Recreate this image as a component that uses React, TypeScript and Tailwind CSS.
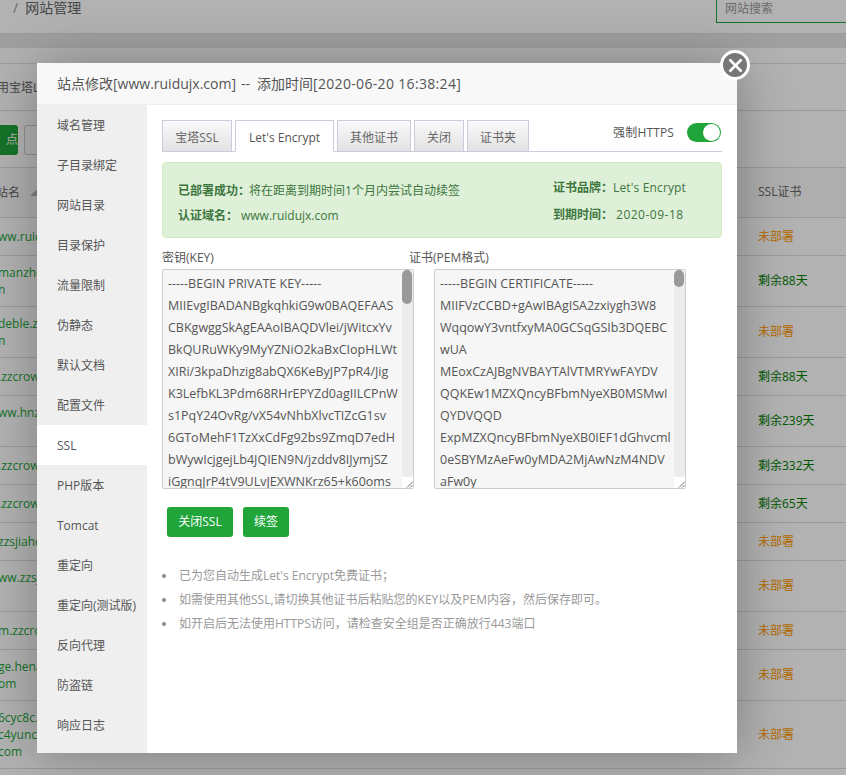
import { X } from "lucide-react";

const menu = ["域名管理", "子目录绑定", "网站目录", "目录保护", "流量限制", "伪静态", "默认文档", "配置文件", "SSL", "PHP版本", "Tomcat", "重定向", "重定向(测试版)", "反向代理", "防盗链", "响应日志"];

const rows = [
  { h: "h-[38px]", lines: ["ww.ruidujx.com"], ssl: "未部署" },
  { h: "h-[51px]", lines: ["manzhe.zzcrowd.co", "n"], ssl: "剩余88天" },
  { h: "h-[51px]", lines: ["deble.zzcrowd.co", "n"], ssl: "未部署" },
  { h: "h-[38px]", lines: [".zzcrowd.com"], ssl: "剩余88天" },
  { h: "h-[51px]", lines: ["ww.hnzzcrowd.com", "\u00a0"], ssl: "剩余239天" },
  { h: "h-[38px]", lines: [".zzcrowd.com"], ssl: "剩余332天" },
  { h: "h-[38px]", lines: [".zzcrowd.com"], ssl: "剩余65天" },
  { h: "h-[38px]", lines: ["zzsjiahe.com"], ssl: "未部署" },
  { h: "h-[51px]", lines: ["ww.zzsjiahe.com", "\u00a0"], ssl: "未部署" },
  { h: "h-[38px]", lines: ["m.zzcrowd.com"], ssl: "未部署" },
  { h: "h-[51px]", lines: ["ge.henan.com", "om"], ssl: "未部署" },
  { h: "h-[68px]", lines: ["6cyc8c.com", "c4yunc.com", "com"], ssl: "未部署" },
];

const keyLines = [
  "-----BEGIN PRIVATE KEY-----",
  "MIIEvgIBADANBgkqhkiG9w0BAQEFAAS",
  "CBKgwggSkAgEAAoIBAQDVlei/jWitcxYv",
  "BkQURuWKy9MyYZNiO2kaBxCIopHLWt",
  "XIRi/3kpaDhzig8abQX6KeByJP7pR4/Jig",
  "K3LefbKL3Pdm68RHrEPYZd0agIILCPnW",
  "s1PqY24OvRg/vX54vNhbXlvcTIZcG1sv",
  "6GToMehF1TzXxCdFg92bs9ZmqD7edH",
  "bWywIcjgejLb4JQIEN9N/jzddv8IJymjSZ",
  "iGgnqJrP4tV9ULvJEXWNKrz65+k60oms",
];

const certLines = [
  "-----BEGIN CERTIFICATE-----",
  "MIIFVzCCBD+gAwIBAgISA2zxiygh3W8",
  "WqqowY3vntfxyMA0GCSqGSIb3DQEBC",
  "wUA",
  "MEoxCzAJBgNVBAYTAlVTMRYwFAYDV",
  "QQKEw1MZXQncyBFbmNyeXB0MSMwI",
  "QYDVQQD",
  "ExpMZXQncyBFbmNyeXB0IEF1dGhvcml",
  "0eSBYMzAeFw0yMDA2MjAwNzM4NDV",
  "aFw0y",
];

function PemBox({ lines, thumb }: { lines: string[]; thumb: string }) {
  return (
    <div className="relative w-[252px] h-[220px] border border-[#ccc] rounded-[2px] bg-[#f6f6f6] overflow-hidden pl-[5px] pt-[3px] text-[12.5px] leading-[22px] text-[#555] whitespace-nowrap">
      {lines.map((l, i) => (
        <div key={i}>{l}</div>
      ))}
      <div className="absolute right-0 top-0 bottom-0 w-[11px] bg-[#f6f6f6] flex flex-col">
        <div className="flex-1 bg-[#ececec] rounded-full">
          <div className={`w-[10px] rounded-full bg-[#999] ${thumb}`} />
        </div>
        <div className="h-[11px] bg-white flex items-end justify-end">
          <svg width="7" height="7" viewBox="0 0 7 7" stroke="#777" strokeWidth="1">
            <path d="M1 6.5 6.5 1M4 6.5 6.5 4" />
          </svg>
        </div>
      </div>
    </div>
  );
}

function Tab({ label, active, w }: { label: string; active?: boolean; w: string }) {
  return (
    <div
      className={`${w} h-[32px] pt-[3px] flex items-center justify-center border border-[#cfcbdc] ${
        active ? "bg-white border-b-white text-[#555]" : "bg-linear-to-b from-[#fafafa] to-[#e2e2e2] text-[#666]"
      }`}
    >
      {label}
    </div>
  );
}

export default function App() {
  return (
    <div className="relative w-[846px] h-[775px] overflow-hidden bg-white font-['Open_Sans','Noto_Sans_CJK_SC',sans-serif] text-[12px] text-[#555]">
      {/* page behind the dialog */}
      <div className="h-[34px] flex items-start justify-between border-b border-[#ddd] pl-[13px]">
        <div className="text-[14px] text-[#666] pt-px leading-[14px]">
          <span className="text-[#999] mr-[7px]">/</span>网站管理
        </div>
        <div className="w-[130px] h-[23px] border-l border-b border-[#20a53a] pl-[8px] text-[#999] leading-[17px]">网站搜索</div>
      </div>
      <div className="h-[14px] bg-[#e6e6e6]" />
      <div className="h-[16px] border-b border-[#e0e0e0]" />
      <div className="h-[47px] border-b border-[#ddd] flex items-center text-[#666] pt-[2px] -ml-[3px] whitespace-nowrap">用宝塔Linux</div>
      <div className="h-[57px] border-b border-[#ddd] flex items-center gap-[6px] pt-[2px]">
        <div className="w-[18px] h-[30px] bg-[#20a53a] rounded-r-[3px] text-white flex items-center justify-end">点</div>
        <div className="w-[30px] h-[30px] border border-[#ccc] rounded-[3px] bg-white" />
      </div>
      <div className="h-[50px] border-b border-[#ddd] flex items-center justify-between bg-[#fafafa] text-[#666]">
        <div className="flex items-center gap-[10px] text-[12px] -ml-[4px]">
          站名
          <span className="w-0 h-0 border-x-[6px] border-x-transparent border-b-[6px] border-b-[#bbb]" />
        </div>
        <div className="w-[88px] pb-[2px]">SSL证书</div>
      </div>
      {rows.map((r, i) => (
        <div key={i} className={`${r.h} border-b border-[#ddd] flex items-center justify-between`}>
          <div className="text-[12px] leading-[17px] text-[#20a53a] whitespace-nowrap -ml-[2px]">
            {r.lines.map((l, j) => (
              <div key={j}>{l}</div>
            ))}
          </div>
          <div className={`w-[88px] ${r.ssl === "未部署" ? "text-[#ff9900]" : "text-[#008000]"}`}>{r.ssl}</div>
        </div>
      ))}

      <div className="absolute inset-0 bg-black/30" />

      {/* dialog */}
      <div className="absolute left-[37px] top-[63px] w-[700px] h-[690px] bg-white flex flex-col shadow-[1px_1px_50px_rgba(0,0,0,0.3)]">
        <div className="h-[42px] shrink-0 bg-[#f8f8f8] border-b border-[#eee] pl-[20px] flex items-center text-[14px] text-[#555] whitespace-pre">
          站点修改[www.ruidujx.com]<span className="mx-[5px]">--</span>
          <span className="ml-[2px]">添加时间</span>
          <span className="tracking-[0.33px]">[2020-06-20 16:38:24]</span>
        </div>
        <div className="flex flex-1 min-h-0">
          <div className="w-[110px] shrink-0 bg-[#efefef]">
            {menu.map((m) => (
              <div key={m} className={`h-[40px] flex items-center pl-[20px] pt-[2px] ${m === "SSL" ? "bg-white" : ""}`}>
                {m}
              </div>
            ))}
          </div>
          <div className="flex-1 pt-[15px] pl-[15px] pr-[15px]">
            <div className="flex items-start justify-between border-b border-[#cfcbdc] h-[32px]">
              <div className="flex gap-[3px]">
                <Tab label="宝塔SSL" w="w-[70px]" />
                <Tab label="Let's Encrypt" w="w-[99px]" active />
                <Tab label="其他证书" w="w-[74px]" />
                <Tab label="关闭" w="w-[50px]" />
                <Tab label="证书夹" w="w-[62px]" />
              </div>
              <div className="flex items-center gap-[13px] pt-[2px]">
                <span className="pt-[2px] tracking-[0.15px]">强制HTTPS</span>
                <div className="w-[34px] h-[19px] rounded-full bg-[#20a53a] flex items-center justify-end pr-[1px] mr-px">
                  <div className="w-[17px] h-[17px] rounded-full bg-white" />
                </div>
              </div>
            </div>

            <div className="mt-[10px] h-[76px] border border-[#d6e9c6] bg-[#dff0d8] rounded-[4px] text-[#3c763d] flex justify-between pl-[15px] pr-[34px]">
              <div className="pt-[15px]">
                <div className="h-[25px] flex items-center">
                  <b className="font-bold">已部署成功：</b>
                  <span className="-ml-[1px]">将在距离到期时间1个月内尝试自动续签</span>
                </div>
                <div className="h-[25px] flex items-center">
                  <b className="font-bold">认证域名：</b>
                  <span className="ml-[3px]">www.ruidujx.com</span>
                </div>
              </div>
              <div className="pt-[12px] w-[134px]">
                <div className="h-[25px] flex items-center">
                  <b className="font-bold">证书品牌：</b>
                  <span className="tracking-[0.15px]">Let's Encrypt</span>
                </div>
                <div className="h-[30px] flex items-center">
                  <b className="font-bold">到期时间：</b>
                  <span className="ml-[3px] tracking-[0.5px]">2020-09-18</span>
                </div>
              </div>
            </div>

            <div className="flex mt-[12px] h-[19px] leading-[16px]">
              <div className="w-[247px]">密钥(KEY)</div>
              <div>证书(PEM格式)</div>
            </div>
            <div className="flex gap-[20px]">
              <PemBox lines={keyLines} thumb="h-[34px]" />
              <PemBox lines={certLines} thumb="h-[17px]" />
            </div>

            <div className="flex gap-[10px] mt-[18px] ml-[5px]">
              <div className="w-[66px] h-[30px] rounded-[3px] bg-[#20a53a] text-white flex items-center justify-center">关闭SSL</div>
              <div className="w-[46px] h-[30px] rounded-[3px] bg-[#20a53a] text-white flex items-center justify-center">续签</div>
            </div>

            <ul className="mt-[27px] text-[#999] leading-[24px]">
              {["已为您自动生成Let's Encrypt免费证书；", "如需使用其他SSL,请切换其他证书后粘贴您的KEY以及PEM内容，然后保存即可。", "如开启后无法使用HTTPS访问，请检查安全组是否正确放行443端口"].map((t) => (
                <li key={t} className="flex items-center">
                  <span className="w-[4px] h-[4px] rounded-full bg-[#888] mr-[13px]" />
                  {t}
                </li>
              ))}
            </ul>
          </div>
        </div>
      </div>

      {/* close button */}
      <div className="absolute left-[720px] top-[50px] w-[30px] h-[30px] rounded-full bg-[#777] border-[3px] border-white flex items-center justify-center">
        <X size={21} color="white" strokeWidth={3} />
      </div>
    </div>
  );
}
